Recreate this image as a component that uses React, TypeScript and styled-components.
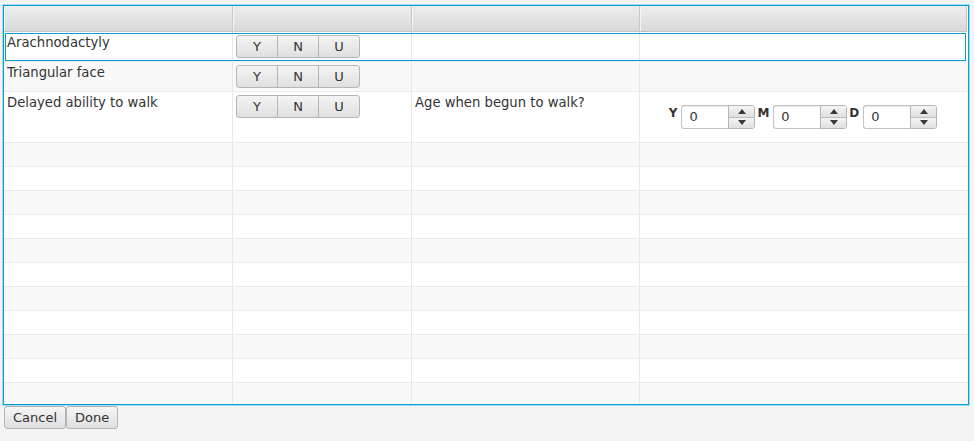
import React from "react";
import styled, { createGlobalStyle } from "styled-components";

const Global = createGlobalStyle`
  html, body { margin: 0; padding: 0; background: #f4f4f4; }
  body {
    font-family: "DejaVu Sans", "Liberation Sans", sans-serif;
    font-size: 13px;
    color: #333;
  }
  * { box-sizing: border-box; }
`;

const Page = styled.div`
  width: 974px;
  height: 441px;
  padding: 5px 0 0 3px;
  display: flex;
  flex-direction: column;
`;

const Table = styled.div`
  width: 966px;
  height: 400px;
  border: 1px solid #039ed3;
  box-shadow: 0 0 0 1px #a8daf0;
  background: #fff;
  display: flex;
  flex-direction: column;
  overflow: hidden;
`;

const COLS = "229px 179px 228px 1fr";

const HeaderRow = styled.div`
  display: grid;
  grid-template-columns: ${COLS};
  height: 26px;
  flex: none;
  background: linear-gradient(#eeeeee, #d9d9d9);
  border-bottom: 1px solid #c4c4c4;
  margin-right: 1px;
`;

const HeaderCell = styled.div`
  border-right: 1px solid #c8c8c8;
  box-shadow: inset 1px 0 0 #f6f6f6;
`;

const Row = styled.div<{ $h: number; $alt?: boolean; $focused?: boolean }>`
  display: grid;
  grid-template-columns: ${COLS};
  height: ${(p) => p.$h}px;
  flex: none;
  background: ${(p) => (p.$alt ? "#f9f9f9" : "#ffffff")};
  border-bottom: 1px solid #ececec;
  ${(p) =>
    p.$focused
      ? `outline: 1px solid #039ed3; outline-offset: -2px; margin-right: 1px;`
      : ""}
`;

const Cell = styled.div`
  border-right: 1px solid #e8e8e8;
  padding: 3px 3px 0 3px;
  line-height: 15px;
  font-size: 13.2px;
  white-space: nowrap;
  overflow: hidden;
`;

const LastCell = styled.div`
  padding: 0;
  display: flex;
  align-items: center;
  justify-content: center;
`;

const Segmented = styled.div`
  display: inline-flex;
  height: 23px;
`;

const SegButton = styled.button<{ $pos: "first" | "mid" | "last" }>`
  width: 42px;
  height: 23px;
  margin: 0;
  margin-left: ${(p) => (p.$pos === "first" ? "0" : "-1px")};
  padding: 0;
  font-family: inherit;
  font-size: 13px;
  color: #333;
  background: linear-gradient(#f4f4f4, #e0e0e0);
  border: 1px solid #b6b6b6;
  border-radius: ${(p) =>
    p.$pos === "first" ? "3px 0 0 3px" : p.$pos === "last" ? "0 3px 3px 0" : "0"};
  line-height: 21px;
`;

const SpinGroup = styled.div`
  display: flex;
  align-items: center;
  margin-left: -2px;
`;

const SpinLabel = styled.span<{ $gap: number }>`
  font-weight: bold;
  font-size: 12px;
  color: #333;
  margin-right: 4px;
  margin-left: ${(p) => p.$gap}px;
  padding-bottom: 9px;
`;

const Spinner = styled.div`
  display: flex;
  width: 74px;
  height: 24px;
`;

const SpinField = styled.div`
  flex: 1;
  background: #fff;
  border: 1px solid #c2c2c2;
  border-right: none;
  border-radius: 3px 0 0 3px;
  padding-left: 7px;
  line-height: 22px;
  font-size: 13px;
  color: #333;
  box-shadow: inset 0 1px 1px #eaeaea;
`;

const SpinArrows = styled.div`
  width: 27px;
  display: flex;
  flex-direction: column;
  border: 1px solid #b6b6b6;
  border-radius: 0 3px 3px 0;
  overflow: hidden;
`;

const ArrowBtn = styled.div<{ $down?: boolean }>`
  flex: 1;
  display: flex;
  align-items: center;
  justify-content: center;
  background: linear-gradient(#f4f4f4, #e0e0e0);
  ${(p) => (p.$down ? "border-top: 1px solid #bdbdbd;" : "")}
`;

const Tri = styled.div<{ $down?: boolean }>`
  width: 0;
  height: 0;
  border-left: 4px solid transparent;
  border-right: 4px solid transparent;
  ${(p) =>
    p.$down ? "border-top: 5px solid #3a3a3a;" : "border-bottom: 5px solid #3a3a3a;"}
`;

const Footer = styled.div`
  display: flex;
  gap: 0;
  margin-top: 1px;
  padding-left: 1px;
`;

const FootButton = styled.button`
  height: 23px;
  padding: 0 8px;
  margin: 0;
  font-family: inherit;
  font-size: 13px;
  color: #333;
  background: linear-gradient(#f6f6f6, #dfdfdf);
  border: 1px solid #b4b4b4;
  border-radius: 3px;
  line-height: 21px;
`;

const YNU = () => (
  <Segmented>
    <SegButton $pos="first">Y</SegButton>
    <SegButton $pos="mid">N</SegButton>
    <SegButton $pos="last">U</SegButton>
  </Segmented>
);

const Spin = ({ label, gap }: { label: string; gap: number }) => (
  <>
    <SpinLabel $gap={gap}>{label}</SpinLabel>
    <Spinner>
      <SpinField>0</SpinField>
      <SpinArrows>
        <ArrowBtn>
          <Tri />
        </ArrowBtn>
        <ArrowBtn $down>
          <Tri $down />
        </ArrowBtn>
      </SpinArrows>
    </Spinner>
  </>
);

const emptyRows = Array.from({ length: 11 }, (_, i) => i);

export default function App() {
  return (
    <>
      <Global />
      <Page>
        <Table>
          <HeaderRow>
            <HeaderCell />
            <HeaderCell />
            <HeaderCell />
            <HeaderCell />
          </HeaderRow>
          <Row $h={30} $focused>
            <Cell>Arachnodactyly</Cell>
            <Cell>
              <YNU />
            </Cell>
            <Cell />
            <LastCell />
          </Row>
          <Row $h={30} $alt>
            <Cell>Triangular face</Cell>
            <Cell>
              <YNU />
            </Cell>
            <Cell />
            <LastCell />
          </Row>
          <Row $h={51}>
            <Cell>Delayed ability to walk</Cell>
            <Cell>
              <YNU />
            </Cell>
            <Cell>Age when begun to walk?</Cell>
            <LastCell>
              <SpinGroup>
                <Spin label="Y" gap={0} />
                <Spin label="M" gap={2} />
                <Spin label="D" gap={2} />
              </SpinGroup>
            </LastCell>
          </Row>
          {emptyRows.map((i) => (
            <Row key={i} $h={24} $alt={i % 2 === 0}>
              <Cell />
              <Cell />
              <Cell />
              <LastCell />
            </Row>
          ))}
        </Table>
        <Footer>
          <FootButton>Cancel</FootButton>
          <FootButton>Done</FootButton>
        </Footer>
      </Page>
    </>
  );
}
